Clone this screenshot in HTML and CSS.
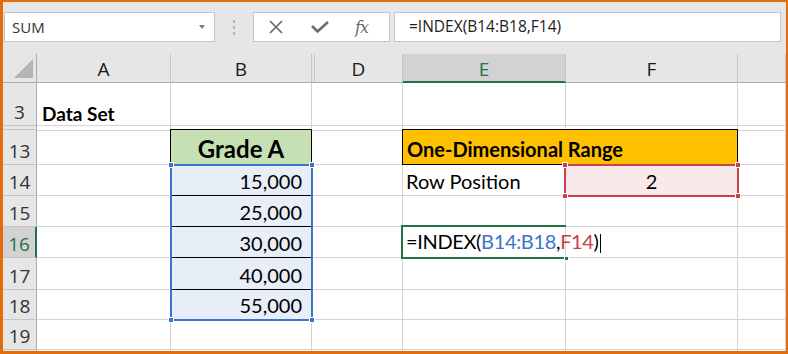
FILE: index.html
```html
<!DOCTYPE html>
<html lang="en">
<head>
  <meta charset="UTF-8">
  <title>INDEX - One-Dimensional Range</title>
  <link rel="stylesheet" href="styles.css">
</head>
<body>
  <div class="frame">
    <!-- Name box + formula bar -->
    <div class="toolbar">
      <div class="namebox">
        <span>SUM</span>
        <span class="caret"></span>
      </div>
      <div class="grip"><i></i><i></i><i></i></div>
      <div class="fbuttons">
        <svg width="16" height="16" viewBox="0 0 16 16"><path d="M2 2 L14 14 M14 2 L2 14" stroke="#6b6b6b" stroke-width="1.7" fill="none"/></svg>
        <svg width="18" height="14" viewBox="0 0 18 14"><path d="M1 5 L6.5 10.5 L17 1" stroke="#6b6b6b" stroke-width="2.6" fill="none"/></svg>
        <span class="fx">fx</span>
      </div>
      <div class="formula">=INDEX(B14:B18,F14)</div>
    </div>

    <div class="sheet">
      <div class="cells">
        <!-- column headers -->
        <div class="corner"><span class="tri"></span></div>
        <div class="hdr">A</div>
        <div class="hdr">B</div>
        <div class="hdr"></div>
        <div class="hdr">D</div>
        <div class="hdr on">E</div>
        <div class="hdr">F</div>
        <div class="hdr"></div>

        <!-- row 3 -->
        <div class="rh">3</div>
        <div class="c bold">Data Set</div>
        <div class="c"></div>
        <div class="c cc"></div>
        <div class="c"></div>
        <div class="c"></div>
        <div class="c"></div>
        <div class="c"></div>

        <!-- hidden rows 4-12 -->
        <div class="rh"></div>
        <div class="c"></div>
        <div class="c"></div>
        <div class="c cc"></div>
        <div class="c"></div>
        <div class="c"></div>
        <div class="c"></div>
        <div class="c"></div>

        <!-- row 13 -->
        <div class="rh">13</div>
        <div class="c"></div>
        <div class="c title">Grade A</div>
        <div class="c cc"></div>
        <div class="c"></div>
        <div class="c range">One-Dimensional Range</div>
        <div class="c"></div>

        <!-- row 14 -->
        <div class="rh">14</div>
        <div class="c"></div>
        <div class="c num">15,000</div>
        <div class="c cc"></div>
        <div class="c"></div>
        <div class="c ce">Row Position</div>
        <div class="c pos">2</div>
        <div class="c"></div>

        <!-- row 15 -->
        <div class="rh">15</div>
        <div class="c"></div>
        <div class="c num">25,000</div>
        <div class="c cc"></div>
        <div class="c"></div>
        <div class="c"></div>
        <div class="c"></div>
        <div class="c"></div>

        <!-- row 16 -->
        <div class="rh on">16</div>
        <div class="c"></div>
        <div class="c num">30,000</div>
        <div class="c cc"></div>
        <div class="c"></div>
        <div class="c edit"><span>=INDEX(<span class="ref-b">B14:B18</span>,<span class="ref-f">F14</span>)<span class="cursor"></span></span></div>
        <div class="c"></div>
        <div class="c"></div>

        <!-- row 17 -->
        <div class="rh">17</div>
        <div class="c"></div>
        <div class="c num">40,000</div>
        <div class="c cc"></div>
        <div class="c"></div>
        <div class="c"></div>
        <div class="c"></div>
        <div class="c"></div>

        <!-- row 18 -->
        <div class="rh">18</div>
        <div class="c"></div>
        <div class="c num">55,000</div>
        <div class="c cc"></div>
        <div class="c"></div>
        <div class="c"></div>
        <div class="c"></div>
        <div class="c"></div>

        <!-- row 19 -->
        <div class="rh">19</div>
        <div class="c"></div>
        <div class="c"></div>
        <div class="c cc"></div>
        <div class="c"></div>
        <div class="c"></div>
        <div class="c"></div>
        <div class="c"></div>

        <!-- cut-off row -->
        <div class="rh last"></div>
        <div class="c last"></div>
        <div class="c last"></div>
        <div class="c cc last"></div>
        <div class="c last"></div>
        <div class="c last"></div>
        <div class="c last"></div>
        <div class="c last"></div>
      </div>

      <!-- range highlights drawn over the cells -->
      <div class="marks">
        <div class="sel sel-blue">
          <span class="h tl"></span><span class="h tr"></span>
          <span class="h bl"></span><span class="h br"></span>
        </div>
        <div class="sel sel-red">
          <span class="h tl"></span><span class="h tr"></span>
          <span class="h bl"></span><span class="h br"></span>
        </div>
        <div class="active"><span class="fill"></span></div>
      </div>
    </div>
  </div>
</body>
</html>
```

FILE: styles.css
```css
* {
  margin: 0;
  padding: 0;
  box-sizing: border-box;
}

body {
  background: #ffffff;
}

.frame {
  width: 788px;
  height: 354px;
  border: solid #e46c0a;
  border-width: 2px 2px 3px 3px;
  background: #e6e6e6;
  overflow: hidden;
  display: flex;
  flex-direction: column;
}

/* Toolbar */
.toolbar {
  height: 52px;
  flex-shrink: 0;
  display: flex;
  align-items: flex-start;
  padding: 10px 0 0 1px;
  font-family: 'Open Sans', 'DejaVu Sans', sans-serif;
}

.namebox {
  width: 211px;
  height: 30px;
  background: #ffffff;
  border: 1px solid #c6c6c6;
  display: flex;
  align-items: center;
  justify-content: space-between;
  padding: 0 9px 0 7px;
  font-size: 15px;
  color: #333333;
}

.caret {
  width: 0;
  height: 0;
  border-left: 3px solid transparent;
  border-right: 3px solid transparent;
  border-top: 4px solid #7a7a7a;
}

.grip {
  display: flex;
  flex-direction: column;
  gap: 3px;
  margin: 8px 18px 0 18px;
}

.grip i {
  display: block;
  width: 2px;
  height: 3px;
  background: #b4b4b4;
}

.fbuttons {
  width: 137px;
  height: 30px;
  background: #ffffff;
  border: 1px solid #c6c6c6;
  display: flex;
  align-items: center;
  padding-left: 14px;
}

.fbuttons svg:first-child {
  margin-right: 27px;
}

.fbuttons svg:nth-child(2) {
  margin-right: 26px;
  margin-top: 1px;
}

.fx {
  font-family: 'DejaVu Serif', 'Liberation Serif', serif;
  font-style: italic;
  font-size: 16px;
  color: #6b6b6b;
  letter-spacing: -1px;
}

.formula {
  margin-left: 4px;
  width: 387px;
  height: 30px;
  background: #ffffff;
  border: 1px solid #c6c6c6;
  padding: 2px 0 0 14px;
  font-size: 15.5px;
  color: #222222;
}

/* Sheet */
.sheet {
  flex: 1;
  display: grid;
  background: #ffffff;
}

.cells,
.marks {
  grid-area: 1 / 1;
  display: grid;
  grid-template-columns: 34px 134px 141px 3px 88px 163px 172px 48px;
  grid-template-rows: 29px 43px 4px 35px 31px 31px 31px 32px 30px 30px 1fr;
}

.marks {
  pointer-events: none;
}

.cells {
  font-family: 'Lato', 'Liberation Sans', sans-serif;
  font-size: 20px;
  color: #000000;
}

.corner {
  background: #e6e6e6;
  border-right: 1px solid #ababab;
  border-bottom: 1px solid #ababab;
  position: relative;
}

.tri {
  position: absolute;
  right: 3px;
  bottom: 4px;
  width: 0;
  height: 0;
  border-left: 19px solid transparent;
  border-bottom: 19px solid #b4b4b4;
}

.hdr {
  background: #e6e6e6;
  border-right: 1px solid #c6c6c6;
  border-bottom: 1px solid #ababab;
  font-family: 'Open Sans', 'DejaVu Sans', sans-serif;
  font-size: 19px;
  line-height: 20px;
  color: #1a1a1a;
  display: flex;
  align-items: flex-end;
  justify-content: center;
  padding-bottom: 3px;
}

.hdr.on {
  background: #d2d2d2;
  color: #217346;
  border-bottom: 2px solid #217346;
  padding-bottom: 2px;
}

.rh {
  background: #e6e6e6;
  border-right: 1px solid #ababab;
  border-bottom: 1px solid #c6c6c6;
  font-family: 'Open Sans', 'DejaVu Sans', sans-serif;
  font-size: 19px;
  line-height: 20px;
  color: #333333;
  display: flex;
  align-items: flex-end;
  justify-content: center;
  padding-bottom: 3px;
}

.rh.on {
  background: #d2d2d2;
  color: #217346;
  border-right: 2px solid #217346;
}

.c {
  border-right: 1px solid #d4d4d4;
  border-bottom: 1px solid #d4d4d4;
  display: flex;
  align-items: flex-end;
  padding: 0 5px 4px 5px;
  line-height: 20px;
  white-space: nowrap;
}

.c.cc {
  border-right: none;
}

.last,
.rh.last {
  border-bottom: none;
  padding: 0;
}

.bold {
  font-weight: bold;
  font-size: 19px;
  padding-bottom: 1px;
}

.title {
  margin: -1px 0 0 -1px;
  border: 1px solid #000000;
  background: #c6e0b4;
  font-weight: bold;
  font-size: 24px;
  justify-content: center;
  padding-bottom: 5px;
}

.range {
  grid-column: span 2;
  margin: -1px 0 0 -1px;
  border: 1px solid #000000;
  background: #ffc000;
  font-weight: bold;
  padding-left: 4px;
  padding-bottom: 5px;
}

.num {
  background: #e8eef8;
  border-bottom-color: #000000;
  justify-content: flex-end;
  padding-right: 9px;
}

.ce {
  padding-left: 3px;
}

.pos {
  background: #f8e9ea;
  justify-content: center;
}

.edit {
  overflow: visible;
  padding-left: 3px;
  letter-spacing: -0.35px;
}

.edit > span {
  flex-shrink: 0;
}

.ref-b {
  color: #3c74cc;
}

.ref-f {
  color: #c8404a;
}

.cursor {
  display: inline-block;
  width: 1px;
  height: 19px;
  background: #000000;
  margin-left: 1px;
  vertical-align: -4px;
}

/* Selections */
.sel {
  position: relative;
  margin: -1px;
}

.sel-blue {
  grid-column: 3;
  grid-row: 5 / 10;
  border: 2px solid #3c74cc;
}

.sel-red {
  grid-column: 7;
  grid-row: 5;
  border: 2px solid #c8404a;
  margin-left: -2px;
}

.h {
  position: absolute;
  width: 6px;
  height: 6px;
  border: 1px solid #ffffff;
}

.sel-blue .h {
  background: #3c74cc;
}

.sel-red .h {
  background: #c8404a;
}

.h.tl { left: -4px; top: -4px; }
.h.tr { right: -4px; top: -4px; }
.h.bl { left: -4px; bottom: -4px; }
.h.br { right: -4px; bottom: -4px; }

.active {
  grid-column: 6;
  grid-row: 7;
  margin: -2px 0 -1px -2px;
  border: 2px solid #217346;
  border-right: none;
  position: relative;
}

.active .fill {
  position: absolute;
  right: -3px;
  bottom: -4px;
  width: 5px;
  height: 5px;
  background: #217346;
  border: 1px solid #ffffff;
}
```
